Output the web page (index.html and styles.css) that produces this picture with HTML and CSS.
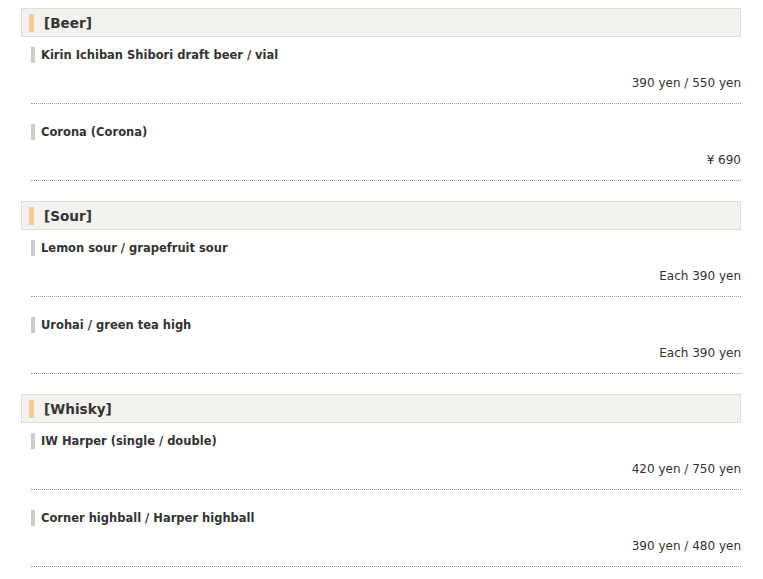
FILE: index.html
```html
<!DOCTYPE html>
<html lang="en">

<head>
    <meta charset="UTF-8">
    <meta name="viewport" content="width=device-width, initial-scale=1.0">
    <title>Drink menu</title>
    <link rel="stylesheet" href="styles.css">
</head>

<body>
    <div id="menu">
        <h2 class="cat">[Beer]</h2>
        <div class="item">
            <p class="name">Kirin Ichiban Shibori draft beer / vial</p>
            <p class="price">390 yen / 550 yen</p>
        </div>
        <div class="item">
            <p class="name">Corona (Corona)</p>
            <p class="price">¥ 690</p>
        </div>

        <h2 class="cat">[Sour]</h2>
        <div class="item">
            <p class="name">Lemon sour / grapefruit sour</p>
            <p class="price">Each 390 yen</p>
        </div>
        <div class="item">
            <p class="name">Urohai / green tea high</p>
            <p class="price">Each 390 yen</p>
        </div>

        <h2 class="cat">[Whisky]</h2>
        <div class="item">
            <p class="name">IW Harper (single / double)</p>
            <p class="price">420 yen / 750 yen</p>
        </div>
        <div class="item">
            <p class="name">Corner highball / Harper highball</p>
            <p class="price">390 yen / 480 yen</p>
        </div>
    </div>
</body>

</html>
```

FILE: styles.css
```css
body {
    margin: 0;
    background-color: #ffffff;
    color: #333333;
    font-family: "DejaVu Sans", Verdana, sans-serif;
}

#menu {
    padding: 8px 22px 0 21px;
}

/* 分类标题 */
.cat {
    display: flex;
    align-items: center;
    gap: 10px;
    height: 27px;
    margin: 0;
    padding: 0 0 0 7px;
    border: 1px solid #dcdcdc;
    background-color: #f3f2ef;
    font-size: 13.6px;
    font-weight: bold;
    color: #333333;
}

.cat::before {
    content: "";
    width: 5px;
    height: 18px;
    background-color: #f6cc94;
}

.item {
    margin: 10px 0 20px 10px;
    padding-bottom: 12px;
    border-bottom: 1px dotted #999999;
}

.item .name {
    display: flex;
    align-items: center;
    gap: 6px;
    margin: 0;
    line-height: 16px;
    font-size: 11.5px;
    font-weight: bold;
}

.item .name::before {
    content: "";
    width: 4px;
    height: 16px;
    background-color: #cccccc;
}

.item .price {
    margin: 12px 0 0;
    line-height: 16px;
    font-size: 12px;
    text-align: right;
}
```
